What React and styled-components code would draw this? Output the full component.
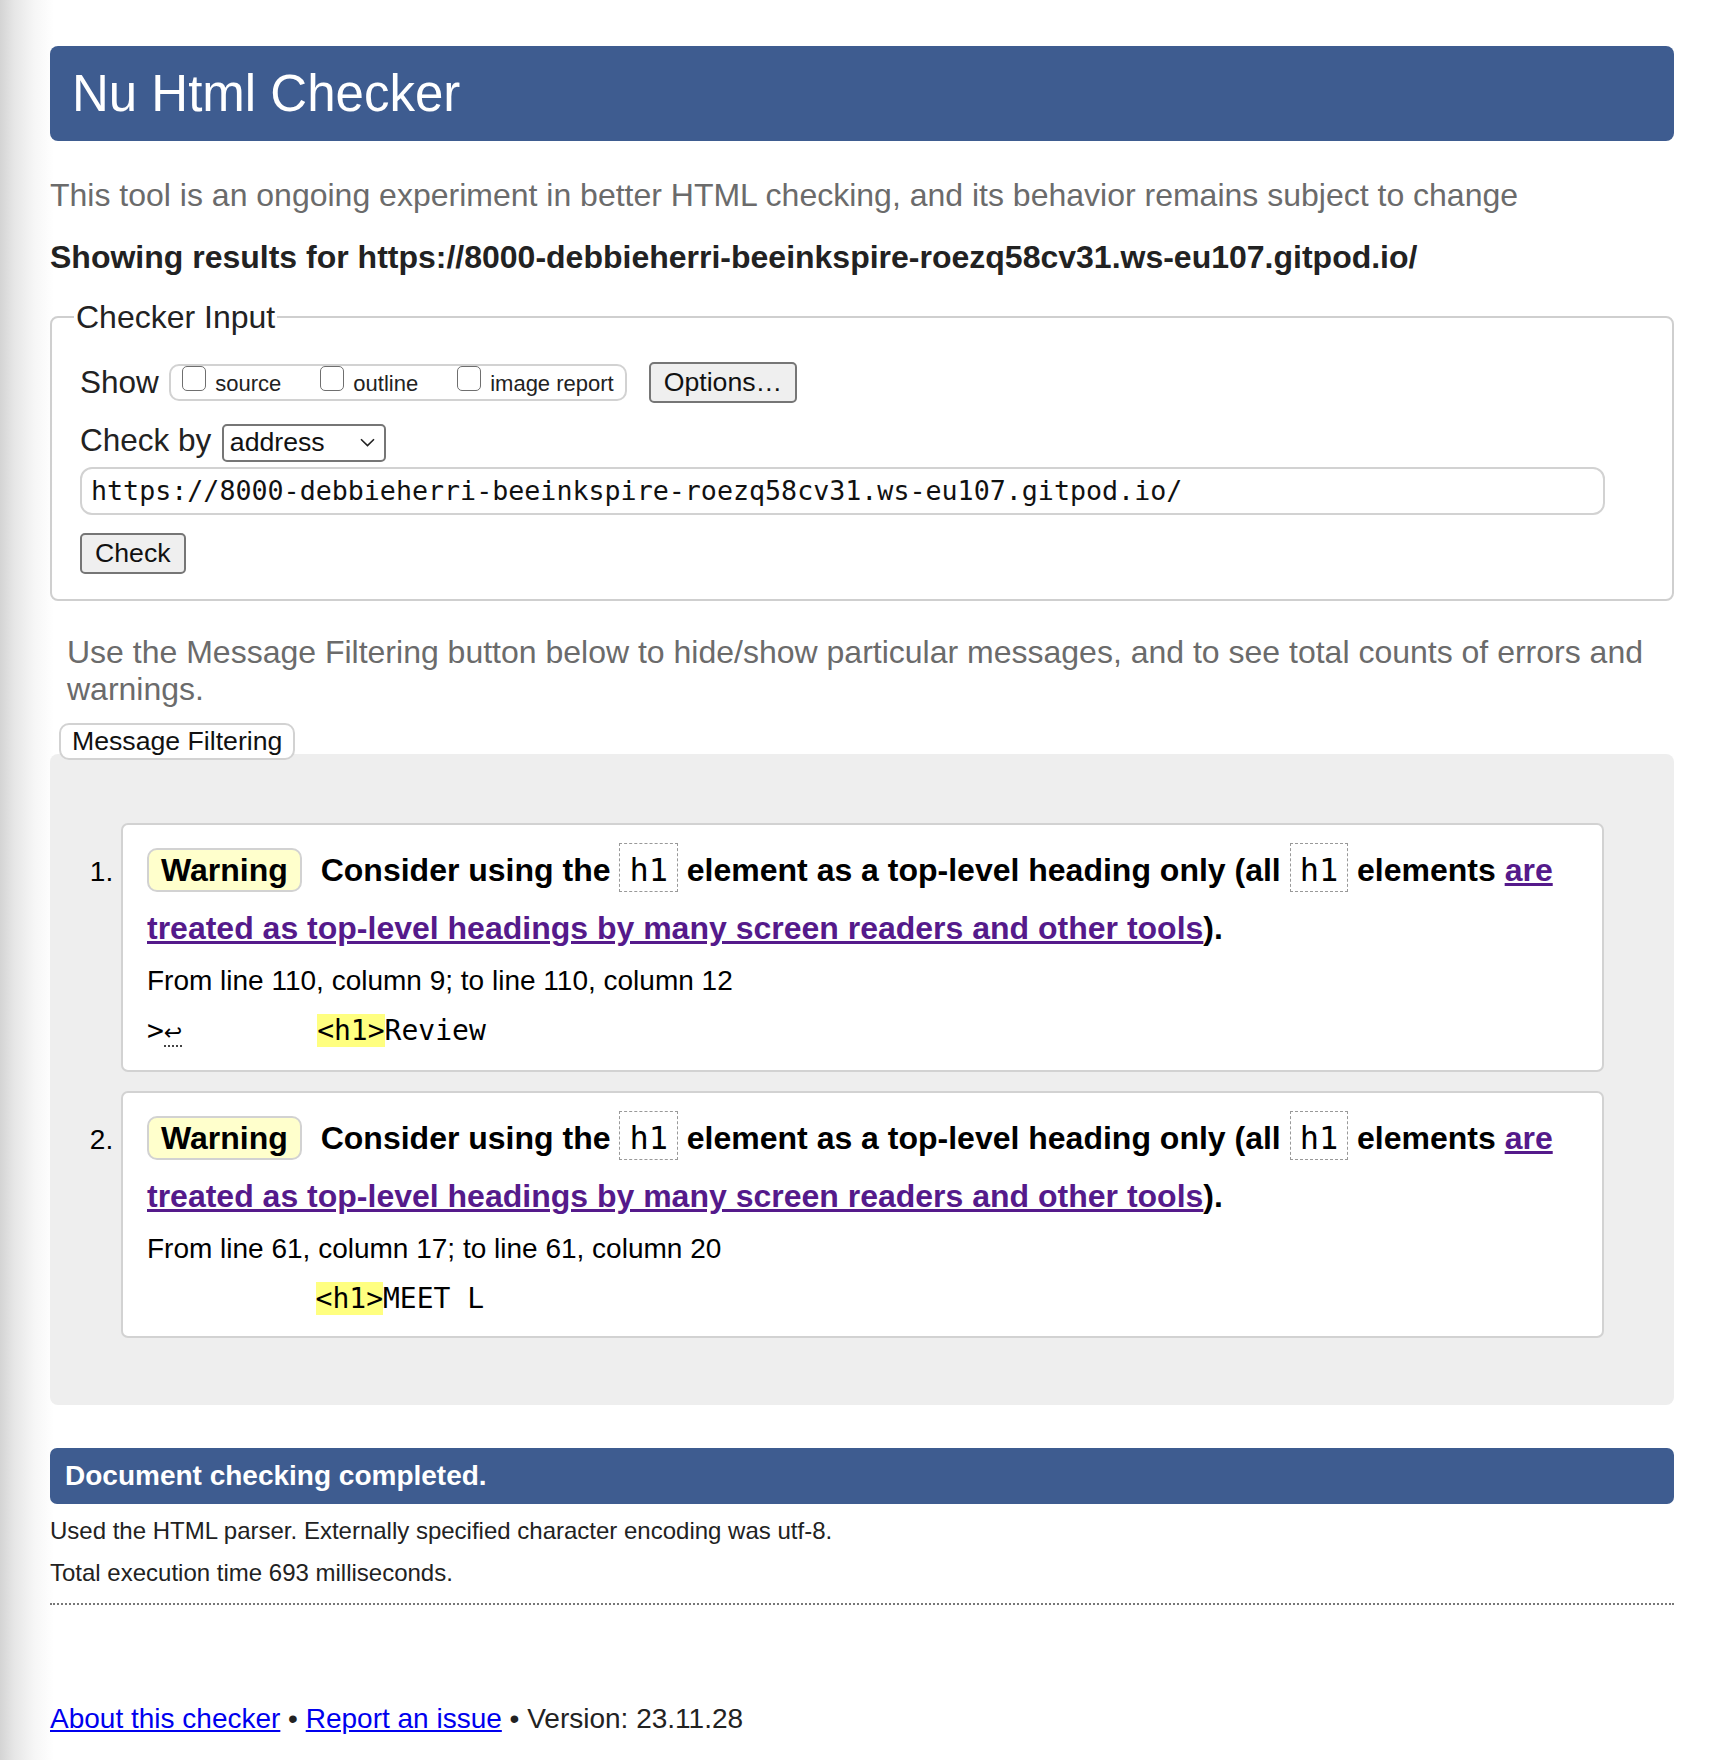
import React from "react";
import styled, { createGlobalStyle } from "styled-components";

const GlobalStyle = createGlobalStyle`
  html, body { margin: 0; padding: 0; }
  body {
    background: linear-gradient(to right, #d4d4d4 0px, #e6e6e6 14px, #f6f6f6 34px, #ffffff 54px);
    font-family: "Liberation Sans", Arial, Helvetica, sans-serif;
    color: #222;
  }
`;

const Page = styled.div`
  box-sizing: border-box;
  min-height: 1760px;
  padding: 46px 52px 0 50px;
`;

const Header = styled.header`
  height: 95px;
  background: #3e5c90;
  border-radius: 8px;
  display: flex;
  align-items: center;
  padding-left: 22px;
`;

const Title = styled.h1`
  margin: 0;
  font-size: 51px;
  font-weight: normal;
  color: #fff;
  line-height: 1;
`;

const Tagline = styled.p`
  margin: 36px 0 0;
  font-size: 32px;
  line-height: 37px;
  color: #6b6b6b;
`;

const Showing = styled.p`
  margin: 25px 0 0;
  font-size: 32px;
  line-height: 37px;
  font-weight: bold;
  color: #222;
`;

const Fieldset = styled.fieldset`
  margin: 23px 0 0;
  border: 2px solid #cfcfcf;
  border-radius: 8px;
  padding: 27px 67px 25px 28px;
  min-width: 0;
`;

const Legend = styled.legend`
  font-size: 32px;
  line-height: 36px;
  padding: 0 2px;
  margin-left: -6px;
  color: #222;
`;

const Row = styled.div`
  display: flex;
  align-items: ${(p) => p.$align || "center"};
  margin-top: ${(p) => p.$mt || 0}px;
`;

const RowLabel = styled.span`
  font-size: 31.5px;
  margin-right: 10.5px;
  color: #222;
`;

const ShowGroup = styled.div`
  box-sizing: border-box;
  height: 37px;
  border: 2px solid #d2d2d2;
  border-radius: 10px;
  padding: 0 11px;
  display: flex;
  align-items: flex-start;
`;

const CheckLabel = styled.label`
  font-size: 22px;
  line-height: 25px;
  color: #222;
  margin-left: ${(p) => (p.$first ? 0 : 39)}px;
  white-space: nowrap;
`;

const Box = styled.span`
  display: inline-block;
  box-sizing: border-box;
  width: 24px;
  height: 25px;
  border: 1.5px solid #6f6f6f;
  border-radius: 5px;
  background: #fff;
  margin-right: 9px;
  vertical-align: baseline;
`;

const Button = styled.button`
  box-sizing: border-box;
  height: 41px;
  padding: 0 13px;
  font-family: "Liberation Sans", Arial, sans-serif;
  font-size: 26.67px;
  color: #111;
  background: #efefef;
  border: 2px solid #767676;
  border-radius: 5px;
  margin-left: ${(p) => p.$ml || 0}px;
  margin-top: ${(p) => p.$mt || 0}px;
  align-self: flex-start;
`;

const SelectBox = styled.div`
  box-sizing: border-box;
  width: 164px;
  height: 38px;
  border: 2px solid #767676;
  border-radius: 5px;
  background: #fff;
  display: inline-flex;
  align-items: center;
  justify-content: space-between;
  padding: 0 9px 0 6px;
  font-size: 26.67px;
  color: #111;
`;

const UrlInput = styled.input`
  box-sizing: border-box;
  display: block;
  width: 100%;
  height: 48px;
  margin-top: 5px;
  padding: 0 9px;
  border: 2px solid #d2d2d2;
  border-radius: 12px;
  font-family: "DejaVu Sans Mono", monospace;
  font-size: 26.67px;
  color: #111;
  background: #fff;
  outline: none;
`;

const Form = styled.div`
  display: flex;
  flex-direction: column;
`;

const Intro = styled.p`
  margin: 33.5px 0 0 17px;
  font-size: 32px;
  line-height: 37px;
  color: #6b6b6b;
`;

const FilterButton = styled.button`
  position: relative;
  z-index: 1;
  box-sizing: border-box;
  height: 37px;
  margin: 15px 0 -8px 9px;
  padding: 0 11px;
  background: #fff;
  border: 2px solid #d2d2d2;
  border-radius: 10px;
  font-family: "Liberation Sans", Arial, sans-serif;
  font-size: 26.67px;
  color: #111;
`;

const Panel = styled.div`
  background: #eeeeee;
  border-radius: 8px;
  padding: 69px 70px 67px 0;
`;

const MessageList = styled.ol`
  margin: 0;
  padding-left: 71px;
  list-style: decimal outside;
`;

const MessageItem = styled.li`
  background: #fff;
  border: 2px solid #d2d2d2;
  border-radius: 7px;
  padding: 16px 24px 19px 24px;
  font-size: 28px;
  color: #000;
  & + & {
    margin-top: 19px;
  }
`;

const MessageText = styled.p`
  margin: 0;
  font-size: 32px;
  line-height: 58px;
  font-weight: bold;
  color: #000;
`;

const Badge = styled.span`
  display: inline-block;
  background: #ffffcc;
  border: 2px solid #d2d2d2;
  border-radius: 10px;
  padding: 0 12px;
  line-height: 40px;
  margin-right: 10px;
`;

const CodeBox = styled.code`
  display: inline-block;
  font-family: "DejaVu Sans Mono", monospace;
  font-size: 32px;
  font-weight: normal;
  line-height: 37px;
  padding: 8px 9px 2px;
  border: 1.5px dashed #999;
`;

const MsgLink = styled.a`
  color: #551a8b;
  text-decoration: underline;
`;

const Location = styled.p`
  margin: 6px 0 0;
  font-size: 28px;
  line-height: 36px;
`;

const Extract = styled.p`
  margin: 14px 0 0;
  font-family: "DejaVu Sans Mono", monospace;
  font-size: 28px;
  line-height: 36px;
  white-space: pre;
`;

const Mark = styled.mark`
  background: #ffff80;
  color: #000;
`;

const LineBreak = styled.span`
  font-family: "DejaVu Sans", sans-serif;
  font-size: 22px;
  border-bottom: 2px dotted #444;
`;

const Banner = styled.div`
  margin-top: 43px;
  height: 56px;
  background: #3e5c90;
  border-radius: 7px;
  display: flex;
  align-items: center;
  padding-left: 15px;
  font-size: 28px;
  font-weight: bold;
  color: #fff;
`;

const Detail = styled.p`
  margin: ${(p) => p.$mt}px 0 0;
  font-size: 24px;
  line-height: 28px;
  color: #222;
`;

const Rule = styled.hr`
  margin: 16px 0 0;
  border: 0;
  border-top: 2px dotted #777;
  height: 0;
`;

const Footer = styled.p`
  margin: 98px 0 0;
  font-size: 28px;
  line-height: 32px;
  color: #222;
`;

const FooterLink = styled.a`
  color: #0000ee;
  text-decoration: underline;
`;

const Chevron = () => (
  <svg width="15" height="9" viewBox="0 0 15 9" fill="none">
    <path d="M1 1.2 L7.5 7.6 L14 1.2" stroke="#222" strokeWidth="1.6" />
  </svg>
);

const URL = "https://8000-debbieherri-beeinkspire-roezq58cv31.ws-eu107.gitpod.io/";

const messages = [
  {
    location: "From line 110, column 9; to line 110, column 12",
    prefix: (
      <>
        {">"}
        <LineBreak>↩</LineBreak>
        {"        "}
      </>
    ),
    rest: "Review",
  },
  {
    location: "From line 61, column 17; to line 61, column 20",
    prefix: "          ",
    rest: "MEET L",
  },
];

export default function App() {
  return (
    <>
      <GlobalStyle />
      <Page>
        <Header>
          <Title>Nu Html Checker</Title>
        </Header>
        <Tagline>
          This tool is an ongoing experiment in better HTML checking, and its behavior remains subject to change
        </Tagline>
        <Showing>Showing results for {URL}</Showing>

        <Fieldset>
          <Legend>Checker Input</Legend>
          <Form>
            <Row>
              <RowLabel>Show</RowLabel>
              <ShowGroup>
                <CheckLabel $first>
                  <Box />source
                </CheckLabel>
                <CheckLabel>
                  <Box />outline
                </CheckLabel>
                <CheckLabel>
                  <Box />image report
                </CheckLabel>
              </ShowGroup>
              <Button $ml={22}>Options…</Button>
            </Row>
            <Row $align="baseline" $mt={19}>
              <RowLabel>Check by</RowLabel>
              <SelectBox>
                <span>address</span>
                <Chevron />
              </SelectBox>
            </Row>
            <UrlInput readOnly value={URL} />
            <Button $mt={18}>Check</Button>
          </Form>
        </Fieldset>

        <Intro>
          Use the Message Filtering button below to hide/show particular messages, and to see total counts of errors and warnings.
        </Intro>
        <FilterButton>Message Filtering</FilterButton>
        <Panel>
          <MessageList>
            {messages.map((m, i) => (
              <MessageItem key={i}>
                <MessageText>
                  <Badge>Warning</Badge> Consider using the <CodeBox>h1</CodeBox> element as a top-level heading only (all{" "}
                  <CodeBox>h1</CodeBox> elements{" "}
                  <MsgLink href="#">are treated as top-level headings by many screen readers and other tools</MsgLink>).
                </MessageText>
                <Location>{m.location}</Location>
                <Extract>
                  {m.prefix}
                  <Mark>{"<h1>"}</Mark>
                  {m.rest}
                </Extract>
              </MessageItem>
            ))}
          </MessageList>
        </Panel>

        <Banner>Document checking completed.</Banner>
        <Detail $mt={13}>Used the HTML parser. Externally specified character encoding was utf-8.</Detail>
        <Detail $mt={14}>Total execution time 693 milliseconds.</Detail>
        <Rule />
        <Footer>
          <FooterLink href="#">About this checker</FooterLink> • <FooterLink href="#">Report an issue</FooterLink> • Version: 23.11.28
        </Footer>
      </Page>
    </>
  );
}
